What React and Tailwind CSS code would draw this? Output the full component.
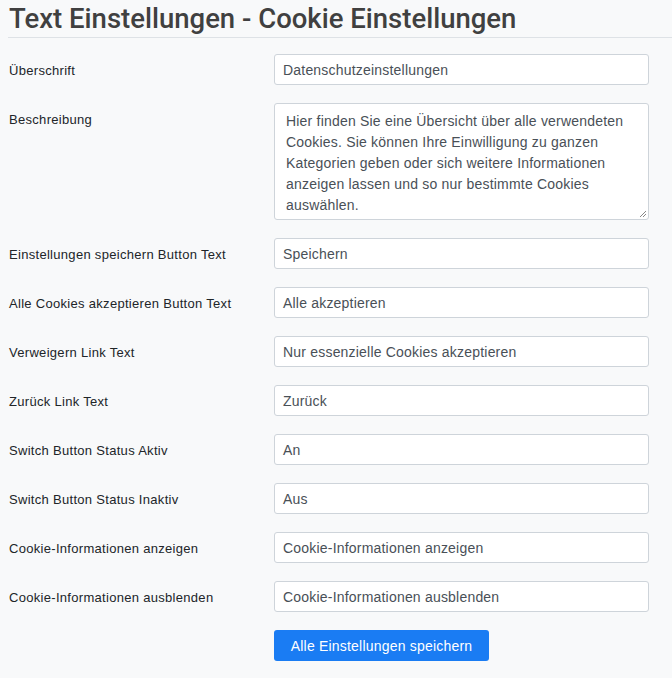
import React from "react";

const rows = [
  ["Einstellungen speichern Button Text", "Speichern"],
  ["Alle Cookies akzeptieren Button Text", "Alle akzeptieren"],
  ["Verweigern Link Text", "Nur essenzielle Cookies akzeptieren"],
  ["Zurück Link Text", "Zurück"],
  ["Switch Button Status Aktiv", "An"],
  ["Switch Button Status Inaktiv", "Aus"],
  ["Cookie-Informationen anzeigen", "Cookie-Informationen anzeigen"],
  ["Cookie-Informationen ausblenden", "Cookie-Informationen ausblenden"],
];

function Row({ label, value }) {
  return (
    <div className="flex items-start">
      <div className="w-[265px] shrink-0 pt-[9px] text-[13px] leading-[16px] tracking-[0.3px] text-[#212529]">{label}</div>
      <div className="w-[375px] h-[31px] bg-white border border-[#ced4da] rounded-[3px] px-[8px] pt-[1px] flex items-center text-[14px] tracking-[0.2px] text-[#495057]">
        {value}
      </div>
    </div>
  );
}

export default function App() {
  return (
    <div className="min-h-[678px] bg-[#f8f9fa] font-['Liberation_Sans',Arial,sans-serif] overflow-hidden">
      <div className="ml-[8px] border-b border-[#dee2e6] pl-[1px] pt-[1px] h-[38px]">
        <h1 className="font-['Roboto',sans-serif] font-medium text-[27.5px] leading-[36px] text-[#404040] whitespace-nowrap">Text Einstellungen - Cookie Einstellungen</h1>
      </div>
      <div className="pl-[9px] pt-[16px] flex flex-col gap-[18px]">
        <Row label="Überschrift" value="Datenschutzeinstellungen" />
        <div className="flex items-start">
          <div className="w-[265px] shrink-0 pt-[9px] text-[13px] leading-[16px] tracking-[0.3px] text-[#212529]">Beschreibung</div>
          <div className="relative w-[375px] h-[117px] bg-white border border-[#ced4da] rounded-[3px] pl-[11px] pr-[8px] pt-[7px] text-[14px] leading-[21px] tracking-[0.2px] text-[#495057]">
            Hier finden Sie eine Übersicht über alle verwendeten Cookies. Sie können Ihre Einwilligung zu ganzen Kategorien geben oder sich weitere Informationen anzeigen lassen und so nur bestimmte Cookies auswählen.
            <svg className="absolute right-[1px] bottom-[1px]" width="8" height="8" viewBox="0 0 8 8">
              <path d="M7 1 L1 7 M7 4 L4 7" stroke="#888" strokeWidth="1" />
            </svg>
          </div>
        </div>
        {rows.map(([l, v]) => (
          <Row key={l} label={l} value={v} />
        ))}
        <div className="flex">
          <div className="w-[265px] shrink-0" />
          <button className="h-[31px] w-[215px] bg-[#1a7cf3] rounded-[3px] text-white text-[14px] tracking-[0.2px] leading-none">
            Alle Einstellungen speichern
          </button>
        </div>
      </div>
    </div>
  );
}
